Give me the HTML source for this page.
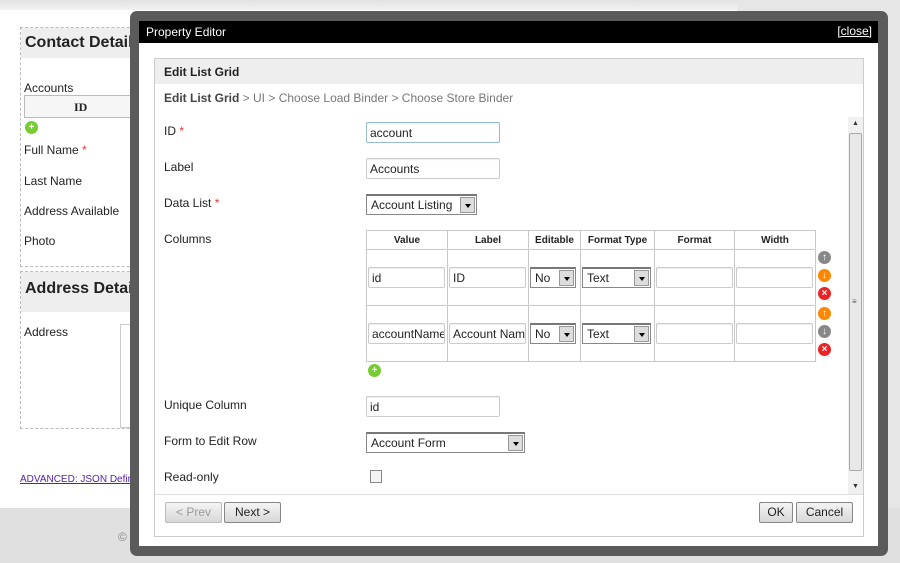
<!DOCTYPE html>
<html><head><meta charset="utf-8"><style>
*{box-sizing:border-box;margin:0;padding:0}
body{width:900px;height:563px;overflow:hidden;position:relative;background:#fff;font-family:"Liberation Sans",sans-serif;font-size:12px;color:#222}
.a{position:absolute;white-space:nowrap}
.inp{position:absolute;border:1px solid #ccc;background:#fff;border-radius:2px;font-size:12px;padding:1px 3px 0;line-height:18px;height:21px;color:#222;box-shadow:inset 0 1px 1px #eee;white-space:nowrap;overflow:hidden}
.sel{position:absolute;border:1px solid #888;border-top:2px solid #777;background:#fff;height:21px;font-size:12px;padding:1px 4px 0;line-height:17px}
.sel i{position:absolute;right:1px;top:1px;width:15px;height:16px;background:#ddd;border:1px solid #999}
.sel i:after{content:"";position:absolute;left:4px;top:6px;border-left:3px solid transparent;border-right:3px solid transparent;border-top:4px solid #000}
.btn{position:absolute;border:1px solid #888;border-radius:2px;background:linear-gradient(#f4f4f4,#d8d8d8);height:21px;line-height:19px;text-align:center;font-size:12px}
.ic{position:absolute;width:13px;height:13px;border-radius:50%;color:#fff;font-size:10px;line-height:13px;text-align:center;font-weight:bold}
table{border-collapse:collapse}
td,th{border:1px solid #c8c8c8}
th{font-size:10px;height:19px}
</style></head><body>
<div class="a" style="left:0;top:0;width:900px;height:10px;background:linear-gradient(#e2e2e2,#f2f2f2)"></div>
<div class="a" style="left:737px;top:0;width:163px;height:508px;background:#e6e6e6"></div>
<div class="a" style="left:0;top:508px;width:900px;height:55px;background:#e0e0e0"></div>
<div class="a" style="left:118px;top:530px;color:#888">© J</div>
<div class="a" style="left:20px;top:27px;width:130px;height:240px;border:1px dashed #bbb"></div>
<div class="a" style="left:21px;top:28px;width:125px;height:30px;background:#eee;font-weight:bold;font-size:16px;padding:6px 4px;overflow:hidden">Contact Details</div>
<div class="a" style="left:24px;top:81px">Accounts</div>
<div class="a" style="left:24px;top:95px;width:120px;height:23px;border:1px solid #bbb;background:#f6f6f6;font-weight:bold;font-family:'Liberation Serif',serif;padding:4px 0 0 49px">ID</div>
<div class="ic" style="left:25px;top:121px;background:#7c3">+</div>
<div class="a" style="left:24px;top:143px">Full Name <span style="color:#e33">*</span></div>
<div class="a" style="left:24px;top:174px">Last Name</div>
<div class="a" style="left:24px;top:204px">Address Available</div>
<div class="a" style="left:24px;top:234px">Photo</div>
<div class="a" style="left:20px;top:271px;width:130px;height:158px;border:1px dashed #bbb"></div>
<div class="a" style="left:21px;top:272px;width:125px;height:40px;background:#eee;font-weight:bold;font-size:16px;padding:8px 4px;overflow:hidden">Address Details</div>
<div class="a" style="left:24px;top:325px">Address</div>
<div class="a" style="left:120px;top:324px;width:20px;height:104px;border:1px solid #ccc"></div>
<div class="a" style="left:20px;top:474px;font-size:10px;color:#52a;text-decoration:underline">ADVANCED: JSON Definition</div>
<!-- dialog -->
<div class="a" style="left:130px;top:11px;width:758px;height:545px;background:#5b5b5b;border-radius:7px"></div>
<div class="a" style="left:139px;top:21px;width:739px;height:22px;background:#000;color:#fff;padding:4px 7px;font-size:12px">Property Editor<span style="position:absolute;right:6px;top:3px;text-decoration:underline">[close]</span></div>
<div class="a" style="left:139px;top:43px;width:739px;height:503px;background:#fff"></div>
<div class="a" style="left:154px;top:58px;width:710px;height:479px;border:1px solid #ccc"></div>
<div class="a" style="left:155px;top:59px;width:708px;height:25px;background:#eee;font-weight:bold;padding:6px 9px">Edit List Grid</div>
<div class="a" style="left:164px;top:91px;color:#777"><b style="color:#444">Edit List Grid</b> &gt; UI &gt; Choose Load Binder &gt; Choose Store Binder</div>
<div class="a" style="left:164px;top:124px">ID <span style="color:#e33">*</span></div>
<div class="inp" style="left:366px;top:122px;width:134px;border-color:#9bc">account</div>
<div class="a" style="left:164px;top:160px">Label</div>
<div class="inp" style="left:366px;top:158px;width:134px">Accounts</div>
<div class="a" style="left:164px;top:196px">Data List <span style="color:#e33">*</span></div>
<div class="sel" style="left:366px;top:194px;width:111px">Account Listing<i></i></div>
<div class="a" style="left:164px;top:232px">Columns</div>
<table class="a" style="left:366px;top:230px;width:450px">
<tr><th style="width:81px">Value</th><th style="width:81px">Label</th><th style="width:52px">Editable</th><th style="width:74px">Format Type</th><th style="width:80px">Format</th><th>Width</th></tr>
<tr style="height:56px"><td></td><td></td><td></td><td></td><td></td><td></td></tr>
<tr style="height:56px"><td></td><td></td><td></td><td></td><td></td><td></td></tr>
</table>
<div class="inp" style="left:368px;top:267px;width:77px">id</div>
<div class="inp" style="left:449px;top:267px;width:77px">ID</div>
<div class="sel" style="left:530px;top:267px;width:46px">No<i></i></div>
<div class="sel" style="left:582px;top:267px;width:69px">Text<i></i></div>
<div class="inp" style="left:656px;top:267px;width:77px"></div>
<div class="inp" style="left:736px;top:267px;width:77px"></div>
<div class="inp" style="left:368px;top:323px;width:77px">accountName</div>
<div class="inp" style="left:449px;top:323px;width:77px">Account Name</div>
<div class="sel" style="left:530px;top:323px;width:46px">No<i></i></div>
<div class="sel" style="left:582px;top:323px;width:69px">Text<i></i></div>
<div class="inp" style="left:656px;top:323px;width:77px"></div>
<div class="inp" style="left:736px;top:323px;width:77px"></div>
<div class="ic" style="left:818px;top:251px;background:#888">↑</div>
<div class="ic" style="left:818px;top:269px;background:#f80">↓</div>
<div class="ic" style="left:818px;top:287px;background:#e22">×</div>
<div class="ic" style="left:818px;top:307px;background:#f80">↑</div>
<div class="ic" style="left:818px;top:325px;background:#888">↓</div>
<div class="ic" style="left:818px;top:343px;background:#e22">×</div>
<div class="ic" style="left:368px;top:364px;background:#7c3">+</div>
<div class="a" style="left:164px;top:398px">Unique Column</div>
<div class="inp" style="left:366px;top:396px;width:134px">id</div>
<div class="a" style="left:164px;top:434px">Form to Edit Row</div>
<div class="sel" style="left:366px;top:432px;width:159px">Account Form<i></i></div>
<div class="a" style="left:164px;top:470px">Read-only</div>
<div class="a" style="left:370px;top:470px;width:12px;height:13px;border:1px solid #888;background:#f4f4f4"></div>
<div class="a" style="left:848px;top:117px;width:15px;height:377px;background:#f0f0f0"></div>
<div class="a" style="left:849px;top:133px;width:13px;height:338px;background:#e8e8e8;border:1px solid #aaa;border-radius:2px"></div>
<div class="a" style="left:852px;top:297px;font-size:8px;color:#555">≡</div>
<div class="a" style="left:852px;top:120px;font-size:7px;color:#333">▲</div>
<div class="a" style="left:852px;top:483px;font-size:7px;color:#333">▼</div>
<div class="a" style="left:155px;top:494px;width:708px;height:1px;background:#ddd"></div>
<div class="btn" style="left:165px;top:502px;width:57px;color:#999;border-color:#bbb">&lt; Prev</div>
<div class="btn" style="left:224px;top:502px;width:57px">Next &gt;</div>
<div class="btn" style="left:759px;top:502px;width:34px">OK</div>
<div class="btn" style="left:796px;top:502px;width:57px">Cancel</div>
</body></html>
